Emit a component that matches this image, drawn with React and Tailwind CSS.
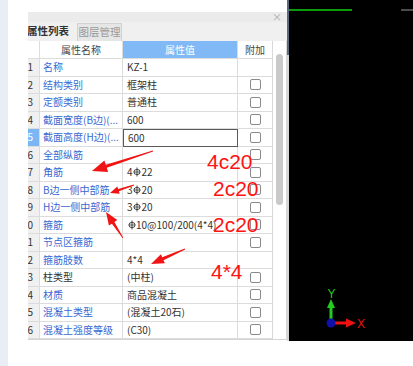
import React from "react";

function Steel() {
  return (
    <svg width="8" height="10" viewBox="0 0 8 10" className="inline-block align-[-1px] mx-[0.5px]">
      <ellipse cx="4" cy="5" rx="3.1" ry="2.6" fill="none" stroke="#333" strokeWidth="0.9" />
      <line x1="4" y1="0.5" x2="4" y2="9.5" stroke="#333" strokeWidth="0.9" />
      <line x1="0.8" y1="5" x2="7.2" y2="5" stroke="#333" strokeWidth="0.8" />
    </svg>
  );
}

const rows = [
  { n: 1, name: "名称", value: "KZ-1", cb: false },
  { n: 2, name: "结构类别", value: "框架柱", cb: true },
  { n: 3, name: "定额类别", value: "普通柱", cb: true },
  { n: 4, name: "截面宽度(B边)(...", value: "600", cb: true },
  { n: 5, name: "截面高度(H边)(...", value: "600", cb: true, sel: true },
  { n: 6, name: "全部纵筋", value: "", cb: true },
  { n: 7, name: "角筋", value: <>4<Steel />22</>, cb: true },
  { n: 8, name: "B边一侧中部筋", value: <>3<Steel />20</>, cb: true },
  { n: 9, name: "H边一侧中部筋", value: <>3<Steel />20</>, cb: true },
  { n: 10, name: "箍筋", value: <><Steel />10@100/200(4*4)</>, cb: true },
  { n: 11, name: "节点区箍筋", value: "", cb: true },
  { n: 12, name: "箍筋肢数", value: "4*4", cb: false },
  { n: 13, name: "柱类型", value: "(中柱)", cb: true, dark: true },
  { n: 14, name: "材质", value: "商品混凝土", cb: true },
  { n: 15, name: "混凝土类型", value: "(混凝土20石)", cb: true },
  { n: 16, name: "混凝土强度等级", value: "(C30)", cb: true },
];

function arrowPts(tx, ty, hx, hy, headLen, headW, shaftTail, shaftHead) {
  const dx = hx - tx, dy = hy - ty;
  const L = Math.hypot(dx, dy);
  const ux = dx / L, uy = dy / L;
  const nx = -uy, ny = ux;
  const bx = hx - ux * headLen, by = hy - uy * headLen;
  const p = (x, y) => `${x.toFixed(1)},${y.toFixed(1)}`;
  return [
    p(tx + nx * shaftTail, ty + ny * shaftTail),
    p(bx + nx * shaftHead, by + ny * shaftHead),
    p(bx + nx * headW, by + ny * headW),
    p(hx, hy),
    p(bx - nx * headW, by - ny * headW),
    p(bx - nx * shaftHead, by - ny * shaftHead),
    p(tx - nx * shaftTail, ty - ny * shaftTail),
  ].join(" ");
}

export default function App() {
  return (
    <div className="w-[413px] h-[366px] relative flex bg-white overflow-hidden font-['Noto_Sans_CJK_SC','Noto_Sans',sans-serif]">
      <div className="w-[8px] shrink-0 bg-[#e9edf5]" />
      <div className="w-[20px] shrink-0" />
      <div className="w-[259px] shrink-0 flex flex-col">
        <div className="h-[12px]" />
        <div className="h-[10px] bg-[#ebebeb] flex items-center justify-end pr-[5px] text-[10px] text-[#aaa] leading-none">×</div>
        <div className="h-[19px] bg-[#f0f0f0] flex items-end overflow-hidden">
          <div className="ml-[-8px] w-[56px] h-[19px] shrink-0 flex items-center justify-center text-[10.5px] font-bold text-[#333] leading-none">属性列表</div>
          <div className="ml-[1px] w-[45px] h-[18px] shrink-0 bg-[#e6e6e6] border border-[#d2d2d2] border-b-0 flex items-center justify-center text-[10.5px] text-[#9a9a9a] leading-none">图层管理</div>
        </div>
        <div className="h-[299px] flex border-b border-[#d4d4d4]">
          <div className="w-[244px] overflow-hidden">
            <div className="ml-[-8px] w-[252px] flex flex-col">
              <div className="h-[18px] flex text-[10px] leading-none">
                <div className="w-[20px] bg-white border-r border-b border-[#dcdcdc]" />
                <div className="w-[83px] bg-white border-r border-b border-[#dcdcdc] flex items-center justify-center text-[#444]">属性名称</div>
                <div className="w-[115px] bg-[#80b9f5] border-r border-b border-[#dcdcdc] flex items-center justify-center text-white">属性值</div>
                <div className="w-[34px] bg-white border-b border-[#dcdcdc] flex items-center justify-center text-[#444]">附加</div>
              </div>
              {rows.map((r) => (
                <div key={r.n} className="h-[17.5px] flex text-[10px] leading-none">
                  <div className={`w-[20px] border-r border-b border-[#dcdcdc] flex items-center justify-end pr-[6px] ${r.sel ? "bg-[#7db6f4] text-white" : "bg-[#f0f0f0] text-[#333]"}`}>{r.n}</div>
                  <div className={`w-[83px] border-r border-b border-[#dcdcdc] flex items-center pl-[3px] whitespace-nowrap overflow-hidden ${r.dark ? "text-[#333]" : "text-[#3a68d2]"}`}>{r.name}</div>
                  <div className={`w-[115px] border-b flex items-center pl-[4px] whitespace-nowrap overflow-hidden text-[#333] ${r.sel ? "border border-[#5a5a5a]" : "border-r border-[#dcdcdc]"}`}>{r.value}</div>
                  <div className="w-[34px] border-b border-[#dcdcdc] flex items-center justify-center">
                    {r.cb && <div className="w-[11px] h-[11px] border border-[#8a8a8a] rounded-[2px] bg-white" />}
                  </div>
                </div>
              ))}
            </div>
          </div>
          <div className="w-[15px] border-l border-r border-[#d8d8d8] bg-white flex flex-col pt-[13px] pl-[3px]">
            <div className="w-[7px] h-[151px] rounded-full bg-[#c9c9c9]" />
          </div>
        </div>
      </div>
      <div className="w-[2px] shrink-0 flex flex-col h-[341px]">
        <div className="h-[55px] bg-[#5c6a7d]" />
        <div className="flex-1 bg-[#d6d6d6]" />
      </div>
      <div className="w-[124px] shrink-0 flex flex-col">
        <div className="h-[341px] bg-black">
          <svg width="124" height="341" viewBox="0 0 124 341">
            <line x1="0" y1="10" x2="63" y2="10" stroke="#0a9a0a" strokeWidth="2" />
            <line x1="112" y1="10" x2="124" y2="10" stroke="#666" strokeWidth="1.5" />
            <line x1="42" y1="320" x2="42" y2="306" stroke="#22cc22" strokeWidth="3" />
            <polygon points="38,308 46,308 42,299" fill="#22cc22" />
            <text x="38.5" y="298" fill="#22cc22" fontSize="12" fontFamily="Liberation Sans, sans-serif">Y</text>
            <line x1="45" y1="323" x2="58" y2="323" stroke="#ee1111" strokeWidth="3" />
            <polygon points="57,318.5 57,327.5 67,323" fill="#ee1111" />
            <text x="68" y="328" fill="#ee1111" fontSize="12" fontFamily="Liberation Sans, sans-serif">X</text>
            <circle cx="42" cy="323" r="4.5" fill="#1010a8" />
          </svg>
        </div>
        <div className="flex-1 bg-white" />
      </div>

      <svg className="absolute inset-0 pointer-events-none" width="413" height="366" viewBox="0 0 413 366">
        <polygon points={arrowPts(153, 151, 92, 171, 15, 6, 0.4, 1.6)} fill="#f01414" />
        <polygon points={arrowPts(134, 185, 110, 193, 9, 3.8, 0.4, 1.2)} fill="#f01414" />
        <polygon points={arrowPts(123, 238, 106, 212, 13, 5, 0.4, 1.5)} fill="#f01414" />
        <polygon points={arrowPts(185, 249, 151, 264, 13, 5, 0.4, 1.6)} fill="#f01414" />
      </svg>
      <div className="absolute left-[207px] top-[151px] text-[21px] leading-none text-[#ff1212] font-['Liberation_Sans',sans-serif]">4c20</div>
      <div className="absolute left-[213px] top-[178px] text-[21px] leading-none text-[#ff1212] font-['Liberation_Sans',sans-serif]">2c20</div>
      <div className="absolute left-[213px] top-[214px] text-[21px] leading-none text-[#ff1212] font-['Liberation_Sans',sans-serif]">2c20</div>
      <div className="absolute left-[211px] top-[261px] text-[21px] leading-none text-[#ff1212] font-['Liberation_Sans',sans-serif]">4*4</div>
    </div>
  );
}
